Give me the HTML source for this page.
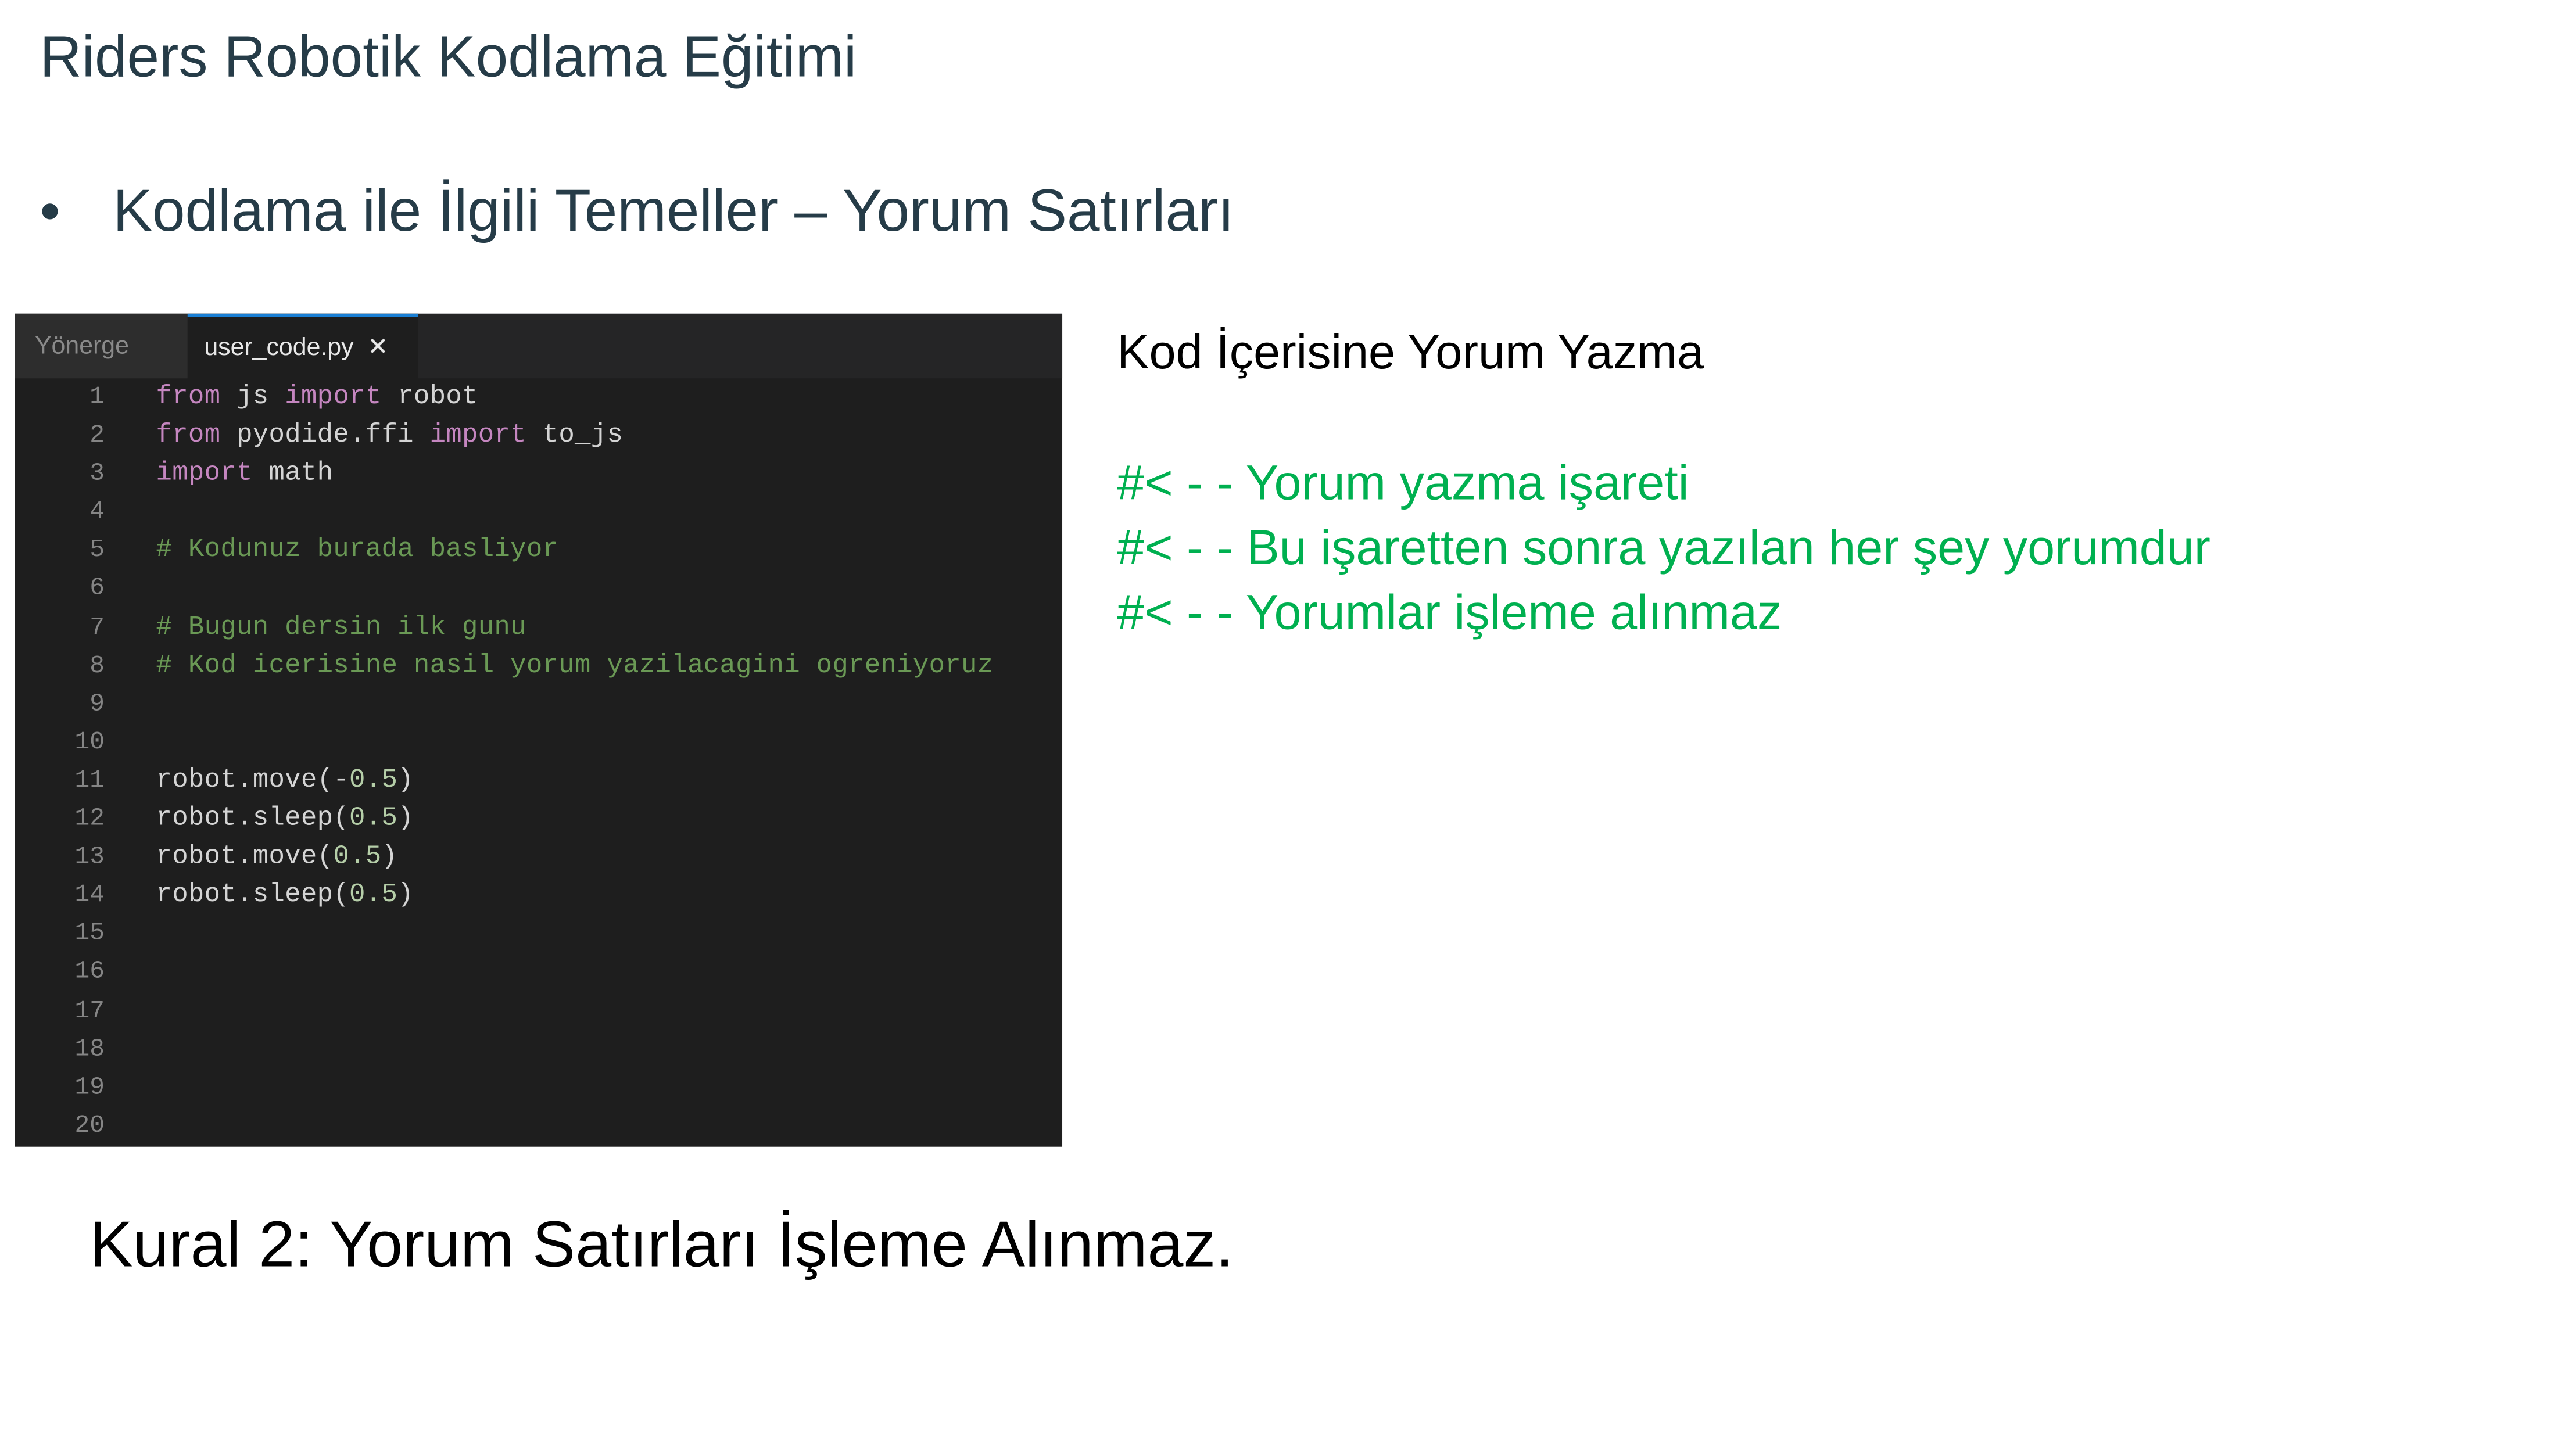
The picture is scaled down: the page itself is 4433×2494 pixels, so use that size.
<!DOCTYPE html>
<html><head><meta charset="utf-8"><style>
html,body{margin:0;padding:0;background:#fff;width:4433px;height:2492px;overflow:hidden}
#w{position:absolute;left:0;top:0;width:1552px;height:873px;transform:scale(2.8563);transform-origin:0 0;font-family:"Liberation Sans",sans-serif}
.a{position:absolute;white-space:nowrap}
.t{color:#263c48;font-size:35px;line-height:1}
#ed{position:absolute;left:9px;top:189px;width:631px;height:502px;background:#1e1e1e}
#tabs{position:absolute;left:0;top:0;width:631px;height:39px;background:#252526}
.tab1{position:absolute;left:0;top:0;width:104px;height:39px;background:#2d2d2d;color:#8a8a8a;font-size:15px;line-height:40px;padding-left:12px;box-sizing:border-box}
.tab2{position:absolute;left:104px;top:0;width:139px;height:39px;background:#1e1e1e;border-top:2px solid #1a7fd4;box-sizing:border-box;color:#e8e8e8;font-size:15px;line-height:38px;padding-left:10px}
.ln{position:absolute;left:0;width:54px;text-align:right;color:#858585;font-family:"Liberation Mono",monospace;font-size:15px}
.cd{position:absolute;left:85px;color:#d4d4d4;font-family:"Liberation Mono",monospace;font-size:16px;letter-spacing:0.1px;white-space:pre}
.k{color:#c586c0}.c{color:#6a9955}.n{color:#b5cea8}
.g{color:#00b050;font-size:29.6px}
</style></head><body><div id="w">
<div class="a t" style="left:24px;top:17px">Riders Robotik Kodlama Eğitimi</div>
<div class="a t" style="left:24px;top:110px">•</div>
<div class="a t" style="left:68px;top:110px;font-size:35.6px">Kodlama ile İlgili Temeller – Yorum Satırları</div>
<div id="ed">
<div id="tabs"><div class="tab1">Yönerge</div><div class="tab2">user_code.py &nbsp;✕</div></div>
<div style="position:absolute;left:0;top:39px;width:631px;height:463px">
<div class="ln" style="top:0;line-height:23.1px">1<br>2<br>3<br>4<br>5<br>6<br>7<br>8<br>9<br>10<br>11<br>12<br>13<br>14<br>15<br>16<br>17<br>18<br>19<br>20</div>
<div class="cd" style="top:0;line-height:23.1px"><span class="k">from</span> js <span class="k">import</span> robot
<span class="k">from</span> pyodide.ffi <span class="k">import</span> to_js
<span class="k">import</span> math

<span class="c"># Kodunuz burada basliyor</span>

<span class="c"># Bugun dersin ilk gunu</span>
<span class="c"># Kod icerisine nasil yorum yazilacagini ogreniyoruz</span>


robot.move(-<span class="n">0.5</span>)
robot.sleep(<span class="n">0.5</span>)
robot.move(<span class="n">0.5</span>)
robot.sleep(<span class="n">0.5</span>)</div>
</div>
</div>
<div class="a" style="left:673px;top:197px;font-size:29px;color:#000">Kod İçerisine Yorum Yazma</div>
<div class="a g" style="left:673px;top:275px">#&lt; - - Yorum yazma işareti</div>
<div class="a g" style="left:673px;top:314px">#&lt; - - Bu işaretten sonra yazılan her şey yorumdur</div>
<div class="a g" style="left:673px;top:353px">#&lt; - - Yorumlar işleme alınmaz</div>
<div class="a" style="left:54px;top:729px;font-size:39px;color:#000">Kural 2: Yorum Satırları İşleme Alınmaz.</div>
</div></body></html>
